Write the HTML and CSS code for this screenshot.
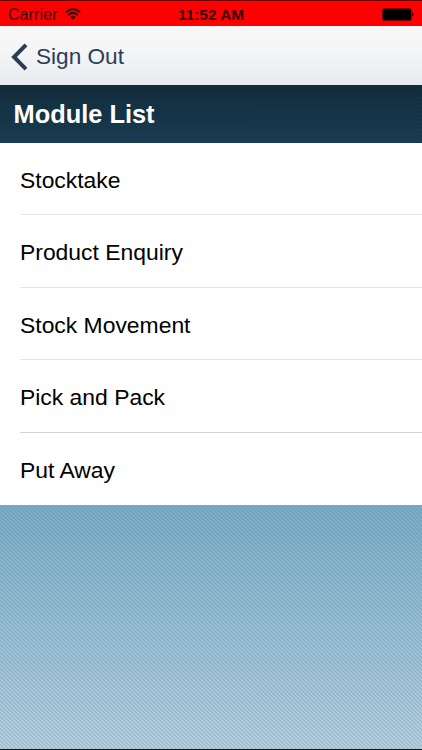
FILE: index.html
```html
<!DOCTYPE html>
<html lang="en">
<head>
  <meta charset="UTF-8" />
  <meta name="viewport" content="width=device-width, initial-scale=1" />
  <title>Module List</title>
  <link rel="stylesheet" href="styles.css">
</head>
<body>

  <div class="status-bar">
    <div class="carrier">
      <span>Carrier</span>
      <svg class="wifi" width="16" height="12" viewBox="0 0 16 12" fill="none" stroke="#380000" stroke-width="2.1">
        <path d="M0.8 4.4C4.8 0.2 11.2 0.2 15.2 4.4" />
        <path d="M3.3 7C6 4.2 10 4.2 12.7 7" />
        <path d="M8 11.7L5.3 8.9C6.8 7.4 9.2 7.4 10.7 8.9Z" fill="#380000" stroke="none" />
      </svg>
    </div>
    <span class="time">11:52 AM</span>
    <svg class="battery" width="32" height="13" viewBox="0 0 32 13">
      <rect x="0.4" y="0.5" width="29" height="12" rx="1.6" fill="#000" />
      <path d="M30.1 4.5C31.9 5 31.9 8 30.1 8.5Z" fill="#200000" />
    </svg>
  </div>

  <nav class="nav-bar">
    <a class="back">
      <svg width="17" height="28" viewBox="0 0 17 28" fill="none" stroke="#2b3e54" stroke-width="4">
        <path d="M15 1.8L3 14L15 26.2" />
      </svg>
      <span>Sign Out</span>
    </a>
  </nav>

  <h1>Module List</h1>

  <ul class="module-list">
    <li>Stocktake</li>
    <li>Product Enquiry</li>
    <li>Stock Movement</li>
    <li>Pick and Pack</li>
    <li>Put Away</li>
  </ul>

  <div class="backdrop"></div>

</body>
</html>
```

FILE: styles.css
```css
* {
  box-sizing: border-box;
}

body {
  margin: 0;
  height: 100vh;
  display: flex;
  flex-direction: column;
  overflow: hidden;
  font-family: "Liberation Sans", Arial, sans-serif;
  background: #fff;
  color: #000;
}

.status-bar {
  height: 26px;
  flex: none;
  display: grid;
  grid-template-columns: 1fr auto 1fr;
  align-items: center;
  padding: 3px 8px 0 8px;
  border-top: 1px solid #6b0000;
  background: #ff0000;
  color: #380000;
  font-size: 15.8px;
  line-height: 20px;
}

.carrier {
  display: flex;
  align-items: center;
  gap: 7px;
  letter-spacing: 0.2px;
}

.wifi {
  position: relative;
  top: -1px;
}

.time {
  font-weight: bold;
  font-size: 15.4px;
}

.battery {
  justify-self: end;
  position: relative;
  top: -1px;
}

.nav-bar {
  height: 59px;
  flex: none;
  display: flex;
  align-items: center;
  padding: 2px 11px 0;
  background: linear-gradient(#f7f7f8, #f4f5f7 45%, #e7eaed);
}

.back {
  display: flex;
  align-items: center;
  gap: 8px;
  color: #2b3e54;
  font-size: 22.6px;
}

/* Dark woven header */
h1 {
  height: 58px;
  flex: none;
  margin: 0;
  padding: 0 13.5px;
  line-height: 59px;
  font-size: 25.4px;
  color: #fff;
  background:
    repeating-linear-gradient(45deg, rgba(0, 0, 0, 0.12) 0 1.414px, transparent 1.414px 2.828px),
    linear-gradient(#122e3d, #1b4058);
}

.module-list {
  flex: none;
  margin: 0;
  padding: 0 0 0 20px;
  list-style: none;
  background: #fff;
}

.module-list li {
  height: 72.4px;
  line-height: 75px;
  font-size: 22.9px;
  border-bottom: 1px solid #e6e6e6;
}

.module-list li:nth-child(4) {
  border-bottom-color: #d4d4d4;
}

.module-list li:last-child {
  border-bottom: none;
}

/* Fine diagonal weave over the blue gradient */
.backdrop {
  flex: 1;
  border-bottom: 1px solid #0c1820;
  background:
    repeating-linear-gradient(45deg, rgba(40, 90, 120, 0.14) 0 1.414px, transparent 1.414px 2.828px),
    linear-gradient(#7baec8, #b6cfdf);
}
```
